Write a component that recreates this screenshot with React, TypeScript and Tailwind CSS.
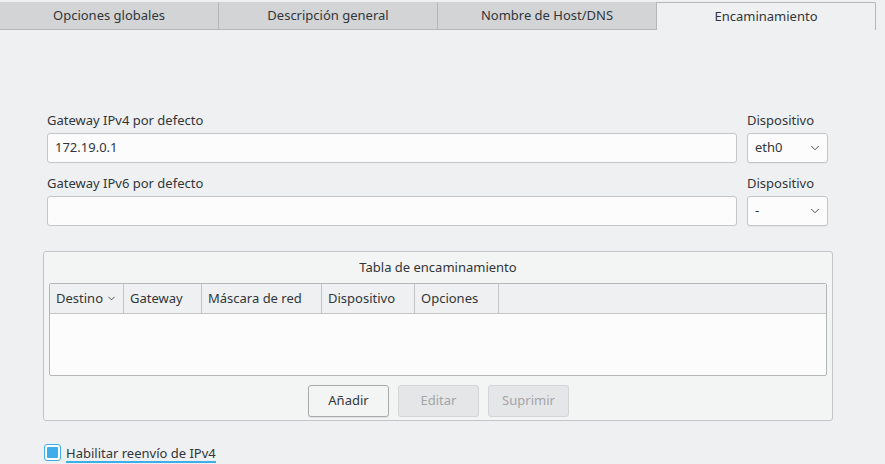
import { ChevronDown } from "lucide-react";

const tabs = ["Opciones globales", "Descripción general", "Nombre de Host/DNS", "Encaminamiento"];

const columns = [
    { label: "Destino", w: "w-[74px]", sort: true },
    { label: "Gateway", w: "w-[78px]" },
    { label: "Máscara de red", w: "w-[120px]" },
    { label: "Dispositivo", w: "w-[93px]" },
    { label: "Opciones", w: "w-[84px]" },
];

const Select = ({ value }: { value: string }) => (
    <div className="h-[30px] w-[81px] rounded-[3px] border border-[#c3c5c6] bg-[#fcfcfc] flex items-center justify-between pl-[7px] pr-[5px] shadow-[0_1px_0_rgba(0,0,0,0.04)]">
        <span>{value}</span>
        <ChevronDown size={14} strokeWidth={1.5} className="text-[#31363b]" />
    </div>
);

const Field = ({ label, value }: { label: string; value: string }) => (
    <div className="flex gap-[10px]">
        <div className="flex-1 flex flex-col">
            <p className="h-[20px] leading-[20px] mb-[3px]">{label}</p>
            <div className="h-[30px] rounded-[3px] border border-[#c3c5c6] bg-[#fcfcfc] flex items-center px-[7px]">
                {value}
            </div>
        </div>
        <div className="w-[81px] flex flex-col">
            <p className="h-[20px] leading-[20px] mb-[3px]">Dispositivo</p>
            <Select value={value ? "eth0" : "-"} />
        </div>
    </div>
);

export default function App() {
    return (
        <div
            className="w-[885px] h-[464px] bg-[#eff0f1] text-[13px] text-[#31363b] overflow-hidden"
            style={{ fontFamily: '"Noto Sans", "Open Sans", sans-serif' }}
        >
            {/* tab bar */}
            <div className="flex pt-[2px] w-[876px]">
                {tabs.map((t, i) => {
                    const active = i === tabs.length - 1;
                    return (
                        <div
                            key={t}
                            className={
                                active
                                    ? "flex-1 h-[28px] flex items-center justify-center bg-[#eff0f1] border-t border-r border-[#b4b6b8] rounded-tr-[2px]"
                                    : "flex-1 h-[28px] flex items-center justify-center bg-[#d3d4d5] border-r border-[#b4b6b8] border-b"
                            }
                        >
                            {t}
                        </div>
                    );
                })}
            </div>

            <div className="pl-[47px] pr-[57px] pt-[80px] flex flex-col gap-[10px]">
                <Field label="Gateway IPv4 por defecto" value="172.19.0.1" />
                <Field label="Gateway IPv6 por defecto" value="" />
            </div>

            {/* routing table group */}
            <div className="ml-[43px] mt-[25px] w-[790px] h-[170px] rounded-[3px] border border-[#c3c5c6] bg-[#f3f4f4] px-[5px] pt-[5px] flex flex-col">
                <p className="text-center h-[21px] leading-[21px]">Tabla de encaminamiento</p>
                <div className="mt-[5px] h-[93px] border border-[#b4b6b8] rounded-[2px] bg-[#fcfcfc] flex flex-col">
                    <div className="h-[30px] flex bg-[#eff0f1] border-b border-[#c3c5c6]">
                        {columns.map((c) => (
                            <div
                                key={c.label}
                                className={`${c.w} h-full flex items-center px-[6px] border-r border-[#c3c5c6] gap-[3px]`}
                            >
                                {c.label}
                                {c.sort && <ChevronDown size={13} strokeWidth={1.75} className="text-[#31363b]" />}
                            </div>
                        ))}
                    </div>
                </div>
                <div className="mt-[9px] flex justify-center gap-[9px] pl-[1px]">
                    <button className="w-[81px] h-[32px] rounded-[3px] border border-[#a8aaac] bg-[#f3f4f4] shadow-[0_1px_1px_rgba(0,0,0,0.08)]">
                        Añadir
                    </button>
                    <button className="w-[81px] h-[32px] rounded-[3px] border border-[#d3d5d6] bg-[#e5e6e7] text-[#a3a5a7]">
                        Editar
                    </button>
                    <button className="w-[81px] h-[32px] rounded-[3px] border border-[#d3d5d6] bg-[#e5e6e7] text-[#a3a5a7]">
                        Suprimir
                    </button>
                </div>
            </div>

            {/* checkbox */}
            <div className="ml-[44px] mt-[23px] flex items-start gap-[5px]">
                <div className="w-[17px] h-[17px] rounded-[3px] border border-[#3daee9] bg-[#fcfcfc] p-[2px]">
                    <div className="w-full h-full bg-[#3daee9] rounded-[1px]" />
                </div>
                <span className="border-b-2 border-[#3daee9] leading-[16px] h-[19px] pt-[1px]">Habilitar reenvío de IPv4</span>
            </div>
        </div>
    );
}
